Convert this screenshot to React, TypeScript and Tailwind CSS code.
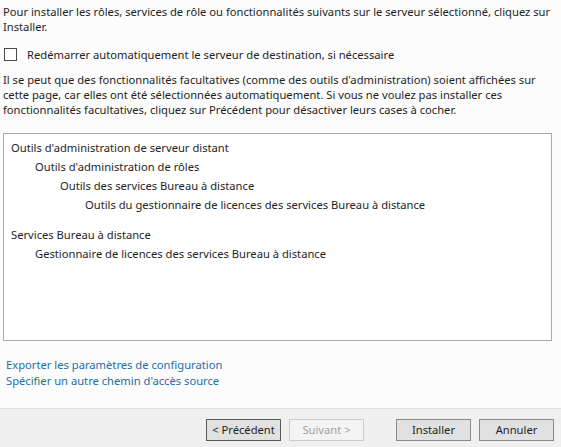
import React from "react";

const font = { fontFamily: '"Noto Sans", "Liberation Sans", sans-serif' };

type Item = { label: string; level: number };

const groups: Item[][] = [
  [
    { label: "Outils d'administration de serveur distant", level: 0 },
    { label: "Outils d'administration de rôles", level: 1 },
    { label: "Outils des services Bureau à distance", level: 2 },
    { label: "Outils du gestionnaire de licences des services Bureau à distance", level: 3 },
  ],
  [
    { label: "Services Bureau à distance", level: 0 },
    { label: "Gestionnaire de licences des services Bureau à distance", level: 1 },
  ],
];

const indent = ["pl-0", "pl-[24px]", "pl-[49px]", "pl-[74px]"];

function WizardButton({
  children,
  disabled = false,
  focused = false,
}: {
  children: React.ReactNode;
  disabled?: boolean;
  focused?: boolean;
}) {
  return (
    <button
      type="button"
      disabled={disabled}
      className={
        "h-[22px] w-[75px] border text-[11.2px] leading-none " +
        (disabled
          ? "border-[#cccccc] bg-[#f4f4f4] text-[#a0a0a0]"
          : focused
            ? "border-[#5a5a5a] bg-[#e1e1e1] text-[#1e1e1e]"
            : "border-[#8a8a8a] bg-[#e1e1e1] text-[#1e1e1e]")
      }
    >
      {children}
    </button>
  );
}

export default function App() {
  return (
    <div
      style={font}
      className="flex h-[447px] w-[561px] flex-col bg-[#fcfcfc] text-[11.2px] text-[#1e1e1e]"
    >
      {/* Main content */}
      <div className="flex h-[408px] flex-col px-[3px] pt-[4px]">
        <p className="whitespace-nowrap leading-[15px]">
          Pour installer les rôles, services de rôle ou fonctionnalités suivants sur le serveur sélectionné, cliquez sur
          <br />
          Installer.
        </p>

        <label className="mt-[13px] flex h-[15px] items-center gap-[10px] pl-[1px]">
          <span className="h-[13px] w-[13px] shrink-0 border border-[#4a4a4a] bg-white" />
          <span className="leading-[15px]">Redémarrer automatiquement le serveur de destination, si nécessaire</span>
        </label>

        <p className="mt-[10px] whitespace-nowrap leading-[15px]">
          Il se peut que des fonctionnalités facultatives (comme des outils d'administration) soient affichées sur
          <br />
          cette page, car elles ont été sélectionnées automatiquement. Si vous ne voulez pas installer ces
          <br />
          fonctionnalités facultatives, cliquez sur Précédent pour désactiver leurs cases à cocher.
        </p>

        {/* Selection list */}
        <div className="mt-[16px] h-[208px] w-[549px] border border-[#ababab] bg-white pl-[7px] pt-[4px]">
          {groups.map((group, gi) => (
            <div key={gi} className={gi > 0 ? "mt-[11px]" : ""}>
              {group.map((item) => (
                <div key={item.label} className={"whitespace-nowrap leading-[19px] " + indent[item.level]}>
                  {item.label}
                </div>
              ))}
            </div>
          ))}
        </div>

        {/* Links */}
        <div className="mt-[16px] flex flex-col pl-[3px] leading-[16px] text-[#1c6ea4]">
          <a href="#">Exporter les paramètres de configuration</a>
          <a href="#">Spécifier un autre chemin d'accès source</a>
        </div>
      </div>

      {/* Footer */}
      <div className="flex h-[39px] items-start border-t border-[#dfdfdf] bg-[#f0f0f0] pr-[7px] pt-[10px]">
        <div className="ml-auto flex gap-[8px]">
          <WizardButton focused>&lt; Précédent</WizardButton>
          <WizardButton disabled>Suivant &gt;</WizardButton>
        </div>
        <div className="ml-[32px] flex gap-[8px]">
          <WizardButton>Installer</WizardButton>
          <WizardButton>Annuler</WizardButton>
        </div>
      </div>
    </div>
  );
}
